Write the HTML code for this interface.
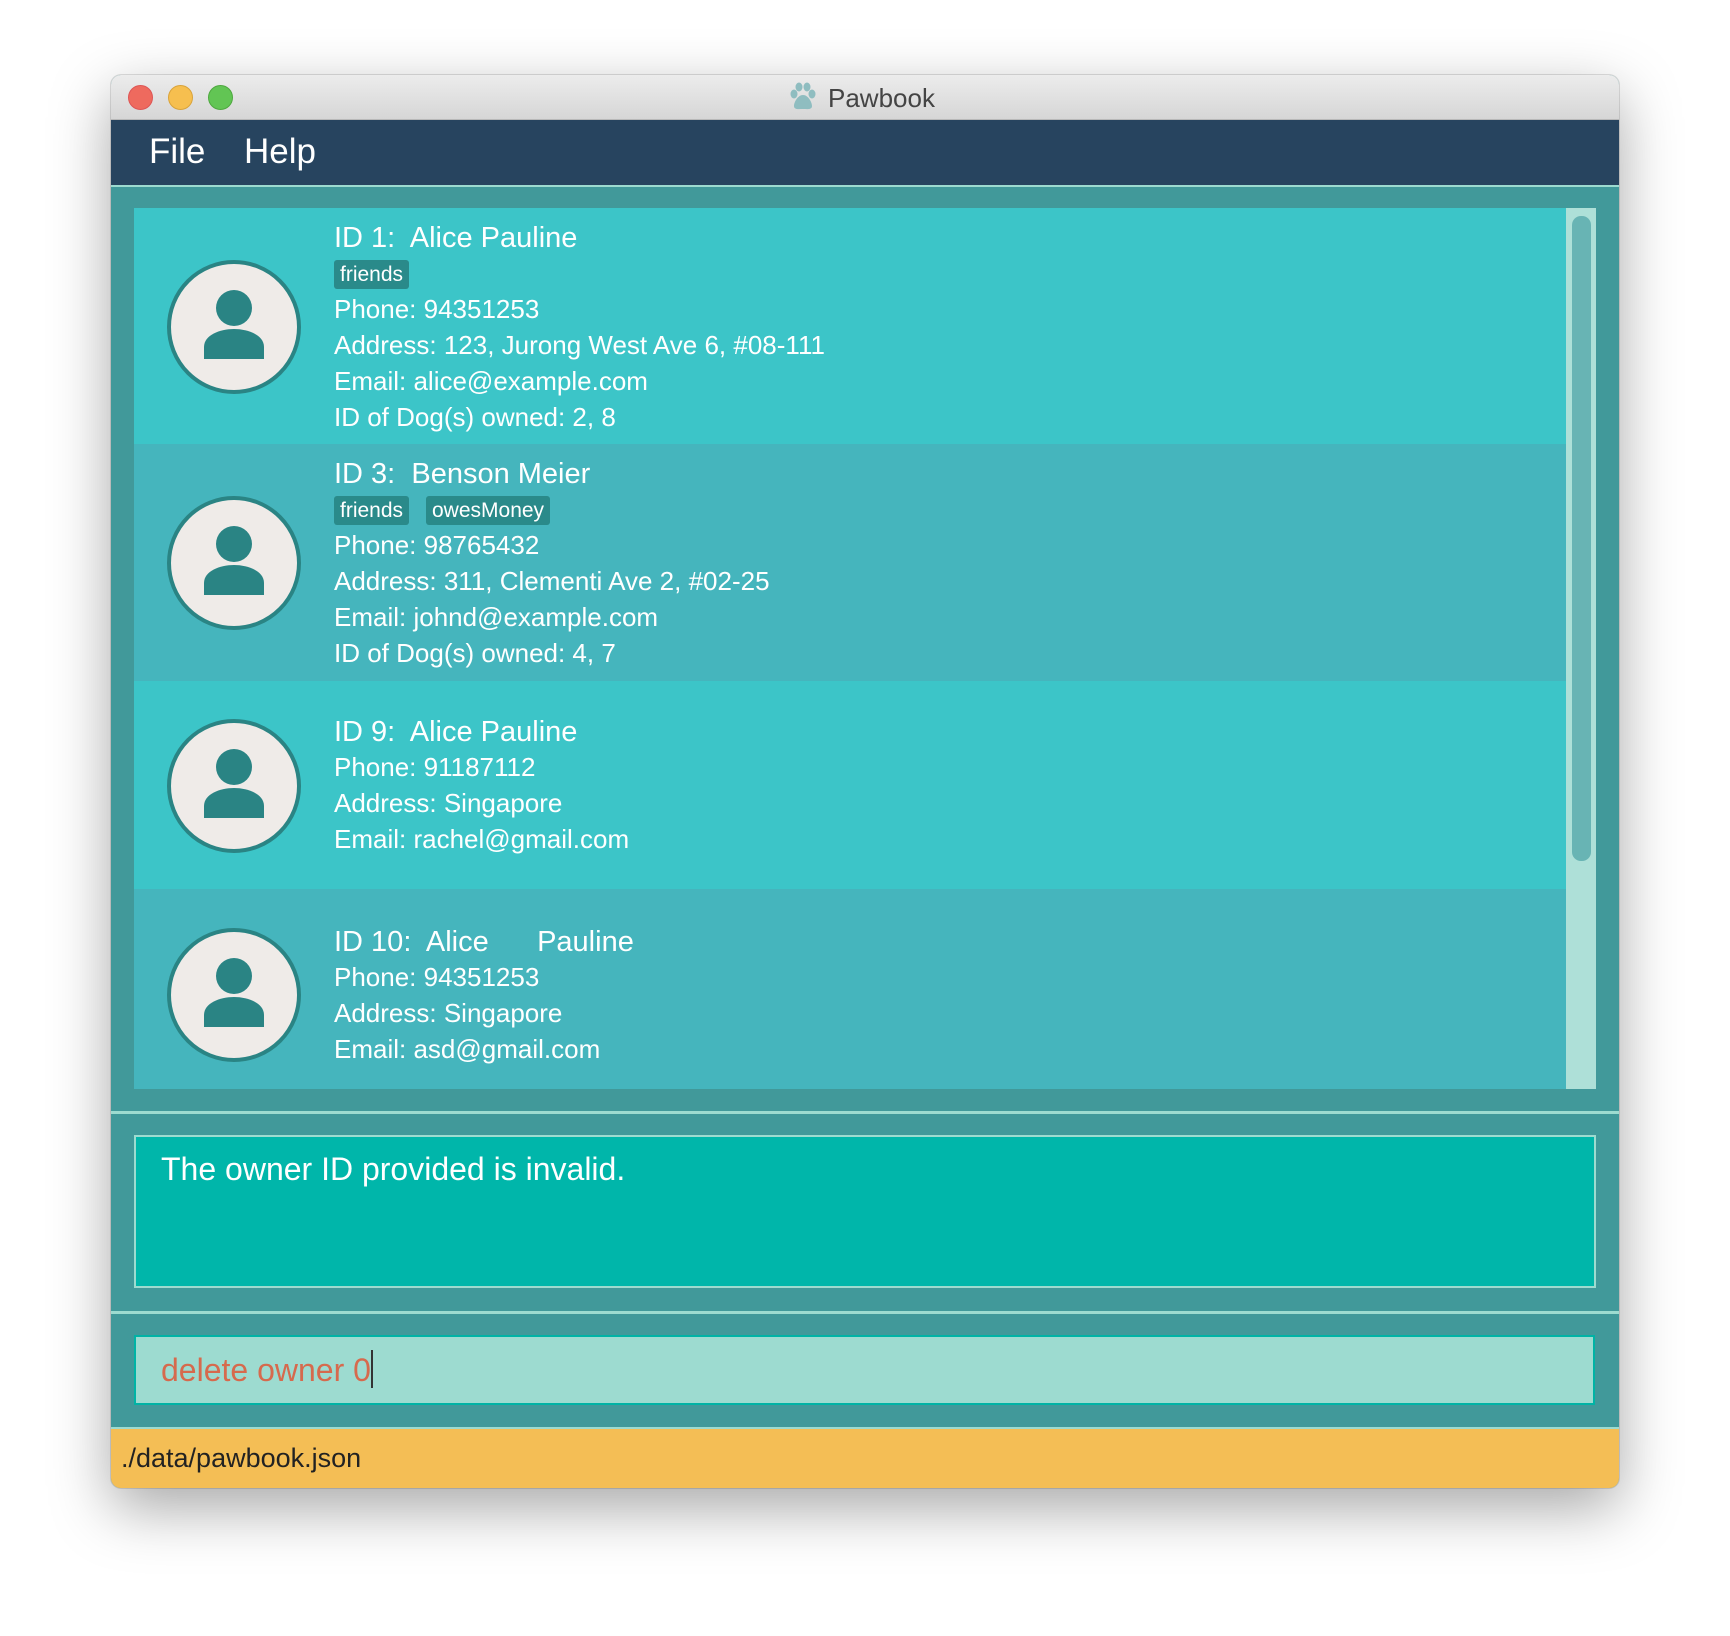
<!DOCTYPE html>
<html><head><style>
*{margin:0;padding:0;box-sizing:border-box}
body{width:1730px;height:1636px;background:#fff;position:relative;overflow:hidden;font-family:"Liberation Sans",sans-serif}
.win{position:absolute;left:111px;top:75px;width:1508px;height:1413px;border-radius:10px;overflow:hidden;box-shadow:0 20px 60px rgba(0,0,0,.35),0 0 0 1px rgba(0,0,0,.12);background:#41999a}
.tb{position:absolute;left:0;top:0;width:100%;height:45px;background:linear-gradient(#ececec,#d6d6d6);border-bottom:1px solid #b8b8b8}
.dot{position:absolute;top:10px;width:25px;height:25px;border-radius:50%}
.title{position:absolute;left:717px;top:8px;font-size:26px;color:#444}
.menu{position:absolute;left:0;top:45px;width:100%;height:67px;background:#27445f;border-bottom:2px solid #9ddbd0}
.menu span{position:absolute;top:12px;color:#fff;font-size:35px}
.card{position:absolute;left:23px;width:1432px;color:#fff}
.av{position:absolute;left:33px;width:134px;height:134px;border-radius:50%;background:#efebe8;border:4px solid #2a8484}
.t{position:absolute;left:200px;font-size:29px;white-space:pre}
.l{position:absolute;left:200px;font-size:26px;white-space:pre}
.tag{position:absolute;height:29px;background:#2a8a8a;border-radius:3px;font-size:21px;padding:2px 6px;line-height:25px}
.sep{position:absolute;left:0;width:100%;height:3px;background:#9ddbd0}
</style></head><body>
<div class="win">
<div class="tb">
<div class="dot" style="left:17px;background:#ee6a5e;border:1px solid #d55"></div>
<div class="dot" style="left:57px;background:#f6bf4f;border:1px solid #d9a33a"></div>
<div class="dot" style="left:97px;background:#62c554;border:1px solid #4ea83f"></div>
<svg style="position:absolute;left:677px;top:7px" width="30" height="30" viewBox="0 0 30 30" fill="#8fbdc0"><ellipse cx="6" cy="12" rx="3.5" ry="4.5"/><ellipse cx="11" cy="5" rx="3.5" ry="4.5"/><ellipse cx="19" cy="5" rx="3.5" ry="4.5"/><ellipse cx="24" cy="12" rx="3.5" ry="4.5"/><path d="M15 13c-5 0-9 7-9 11 0 4 5 3 9 3s9 1 9-3c0-4-4-11-9-11z"/></svg>
<div class="title">Pawbook</div>
</div>
<div class="menu"><span style="left:38px">File</span><span style="left:133px">Help</span></div>

<div class="card" style="top:133px;height:236px;background:#3cc5c8">
<div class="av" style="top:52px"><svg width="126" height="126" viewBox="0 0 126 126"><circle cx="63" cy="44" r="18" fill="#2a8484"/><path d="M33 95v-12c0-12 16-18 30-18s30 6 30 18v12z" fill="#2a8484"/></svg></div>
<div class="t" style="top:14px">ID 1:  Alice Pauline</div>
<div class="tag" style="left:200px;top:52px">friends</div>
<div class="l" style="top:86px">Phone: 94351253</div>
<div class="l" style="top:122px">Address: 123, Jurong West Ave 6, #08-111</div>
<div class="l" style="top:158px">Email: alice@example.com</div>
<div class="l" style="top:194px">ID of Dog(s) owned: 2, 8</div>
</div>
<div class="card" style="top:369px;height:237px;background:#45b5bd">
<div class="av" style="top:52px"><svg width="126" height="126" viewBox="0 0 126 126"><circle cx="63" cy="44" r="18" fill="#2a8484"/><path d="M33 95v-12c0-12 16-18 30-18s30 6 30 18v12z" fill="#2a8484"/></svg></div>
<div class="t" style="top:14px">ID 3:  Benson Meier</div>
<div class="tag" style="left:200px;top:52px">friends</div>
<div class="tag" style="left:292px;top:52px">owesMoney</div>
<div class="l" style="top:86px">Phone: 98765432</div>
<div class="l" style="top:122px">Address: 311, Clementi Ave 2, #02-25</div>
<div class="l" style="top:158px">Email: johnd@example.com</div>
<div class="l" style="top:194px">ID of Dog(s) owned: 4, 7</div>
</div>
<div class="card" style="top:606px;height:208px;background:#3cc5c8">
<div class="av" style="top:38px"><svg width="126" height="126" viewBox="0 0 126 126"><circle cx="63" cy="44" r="18" fill="#2a8484"/><path d="M33 95v-12c0-12 16-18 30-18s30 6 30 18v12z" fill="#2a8484"/></svg></div>
<div class="t" style="top:35px">ID 9:  Alice Pauline</div>
<div class="l" style="top:71px">Phone: 91187112</div>
<div class="l" style="top:107px">Address: Singapore</div>
<div class="l" style="top:143px">Email: rachel@gmail.com</div>
</div>
<div class="card" style="top:814px;height:200px;background:#45b5bd">
<div class="av" style="top:39px"><svg width="126" height="126" viewBox="0 0 126 126"><circle cx="63" cy="44" r="18" fill="#2a8484"/><path d="M33 95v-12c0-12 16-18 30-18s30 6 30 18v12z" fill="#2a8484"/></svg></div>
<div class="t" style="top:37px">ID 10:  Alice      Pauline</div>
<div class="l" style="top:73px">Phone: 94351253</div>
<div class="l" style="top:109px">Address: Singapore</div>
<div class="l" style="top:145px">Email: asd@gmail.com</div>
</div>
<div style="position:absolute;left:1455px;top:133px;width:30px;height:881px;background:#aee0d8"></div>
<div style="position:absolute;left:1461px;top:141px;width:19px;height:645px;background:#68b4b4;border-radius:9px"></div>

<div class="sep" style="top:1036px"></div>
<div style="position:absolute;left:23px;top:1060px;width:1462px;height:153px;background:#00b6aa;border:2px solid #9ddbd0"></div>
<div style="position:absolute;left:50px;top:1076px;font-size:32px;color:#fff">The owner ID provided is invalid.</div>
<div class="sep" style="top:1236px"></div>
<div style="position:absolute;left:23px;top:1260px;width:1461px;height:70px;background:#9ddbd0;border:2px solid #00b3a5"></div>
<div style="position:absolute;left:50px;top:1275px;font-size:32px;color:#d66a4d">delete owner 0<span style="display:inline-block;width:2px;height:38px;background:#333;vertical-align:-7px"></span></div>
<div style="position:absolute;left:0;top:1352px;width:100%;height:61px;background:#f4be55;border-top:2px solid #9ddbd0"></div>
<div style="position:absolute;left:10px;top:1368px;font-size:27px;color:#222">./data/pawbook.json</div>
</div>
</body></html>
